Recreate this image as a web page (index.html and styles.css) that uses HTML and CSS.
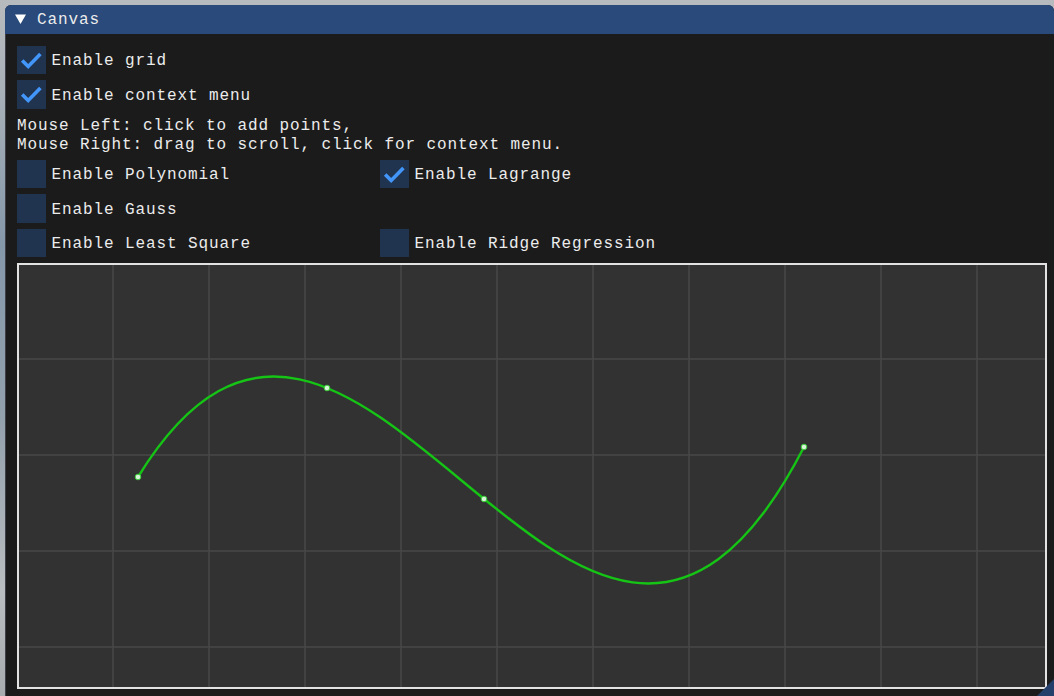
FILE: index.html
```html
<!DOCTYPE html>
<html>
<head>
<meta charset="utf-8">
<link rel="stylesheet" href="styles.css">
</head>
<body>
<div class="window">
  <div class="titlebar">
    <svg class="arrow" width="11" height="10" viewBox="0 0 11 10"><polygon points="0,0.5 11,0.5 5.5,10" fill="#ffffff"/></svg>
    <span class="title">Canvas</span>
  </div>
  <div class="content">
    <div class="cb">
      <span class="box"><svg width="28.5" height="28.5" viewBox="0 0 28.5 28.5"><polyline points="5.2,14.4 11.2,20.4 23.4,8.1" fill="none" stroke="#4296fa" stroke-width="3.6"/></svg></span>
      <span class="lbl">Enable grid</span>
    </div>
    <div class="cb">
      <span class="box"><svg width="28.5" height="28.5" viewBox="0 0 28.5 28.5"><polyline points="5.2,14.4 11.2,20.4 23.4,8.1" fill="none" stroke="#4296fa" stroke-width="3.6"/></svg></span>
      <span class="lbl">Enable context menu</span>
    </div>
    <div class="help">
      <div class="line">Mouse Left: click to add points,</div>
      <div class="line">Mouse Right: drag to scroll, click for context menu.</div>
    </div>
    <div class="opts">
      <div class="cb"><span class="box"></span><span class="lbl">Enable Polynomial</span></div>
      <div class="cb">
        <span class="box"><svg width="28.5" height="28.5" viewBox="0 0 28.5 28.5"><polyline points="5.2,14.4 11.2,20.4 23.4,8.1" fill="none" stroke="#4296fa" stroke-width="3.6"/></svg></span>
        <span class="lbl">Enable Lagrange</span>
      </div>
      <div class="cb"><span class="box"></span><span class="lbl">Enable Gauss</span></div>
      <div class="empty"></div>
      <div class="cb"><span class="box"></span><span class="lbl">Enable Least Square</span></div>
      <div class="cb"><span class="box"></span><span class="lbl">Enable Ridge Regression</span></div>
    </div>
    <svg class="canvas" width="1030" height="426" viewBox="0 0 1030 426">
      <rect x="0" y="0" width="1030" height="426" fill="#323232"/>
      <g stroke="#494949" stroke-width="1.5">
        <line x1="96" y1="0" x2="96" y2="426"/>
        <line x1="192" y1="0" x2="192" y2="426"/>
        <line x1="288" y1="0" x2="288" y2="426"/>
        <line x1="384" y1="0" x2="384" y2="426"/>
        <line x1="480" y1="0" x2="480" y2="426"/>
        <line x1="576" y1="0" x2="576" y2="426"/>
        <line x1="672" y1="0" x2="672" y2="426"/>
        <line x1="768" y1="0" x2="768" y2="426"/>
        <line x1="864" y1="0" x2="864" y2="426"/>
        <line x1="960" y1="0" x2="960" y2="426"/>
        <line x1="0" y1="96" x2="1030" y2="96"/>
        <line x1="0" y1="192" x2="1030" y2="192"/>
        <line x1="0" y1="288" x2="1030" y2="288"/>
        <line x1="0" y1="384" x2="1030" y2="384"/>
      </g>
      <path d="M121 214 C343 -147.32 565 615.54 787 184" fill="none" stroke="#16c416" stroke-width="2.4"/>
      <g fill="#d8f4d8" stroke="#3ccc3c" stroke-width="1">
        <circle cx="121" cy="214" r="2.8"/>
        <circle cx="310" cy="125" r="2.8"/>
        <circle cx="467" cy="236" r="2.8"/>
        <circle cx="787" cy="184" r="2.8"/>
      </g>
      <rect x="1" y="1" width="1028" height="424" fill="none" stroke="#e2e2e2" stroke-width="2"/>
    </svg>
  </div>
  <div class="grip"></div>
</div>
</body>
</html>
```

FILE: styles.css
```css
html, body {
  margin: 0;
  padding: 0;
  height: 100%;
  overflow: hidden;
}

body {
  background: linear-gradient(to bottom, #b8bbbe 0px, #aab2b9 12%, #8598aa 35%, #93a1ad 60%, #b9bdbf 85%, #a7abad 100%);
  padding: 5px 0 0 5px;
  box-sizing: border-box;
  font-family: "Liberation Mono", "DejaVu Sans Mono", monospace;
  font-size: 16px;
  letter-spacing: 0.9px;
  color: #ececec;
}

.window {
  position: relative;
  width: 1049px;
  height: 691px;
  background: #1b1b1b;
  border-radius: 6px 6px 0 0;
  overflow: hidden;
  box-shadow: inset 1px 0 0 rgba(110, 110, 128, 0.45);
}

.titlebar {
  height: 28.5px;
  background: #294a7a;
  display: flex;
  align-items: center;
  padding-left: 10px;
  gap: 11px;
}

.arrow {
  display: block;
}

.title {
  line-height: 19.5px;
  padding-top: 2px;
}

.content {
  padding: 12px 12px 0 12px;
  display: flex;
  flex-direction: column;
  gap: 6px;
}

.cb {
  display: flex;
  align-items: center;
  gap: 6px;
  height: 28.5px;
}

.box {
  width: 28.5px;
  height: 28.5px;
  background: #21344f;
  display: block;
  flex: none;
}

.box svg {
  display: block;
}

.lbl {
  line-height: 19.5px;
  padding-top: 4px;
  white-space: nowrap;
}

.help .line {
  line-height: 19.5px;
  height: 17.5px;
  padding-top: 2px;
  white-space: nowrap;
}

.opts {
  display: grid;
  grid-template-columns: 363px auto;
  row-gap: 6px;
}

.empty {
  height: 28.5px;
}

.canvas {
  display: block;
  flex: none;
}

.grip {
  position: absolute;
  right: 0;
  bottom: 0;
  width: 17px;
  height: 17px;
  background: #24406a;
  clip-path: polygon(100% 0, 100% 100%, 0 100%);
}
```
